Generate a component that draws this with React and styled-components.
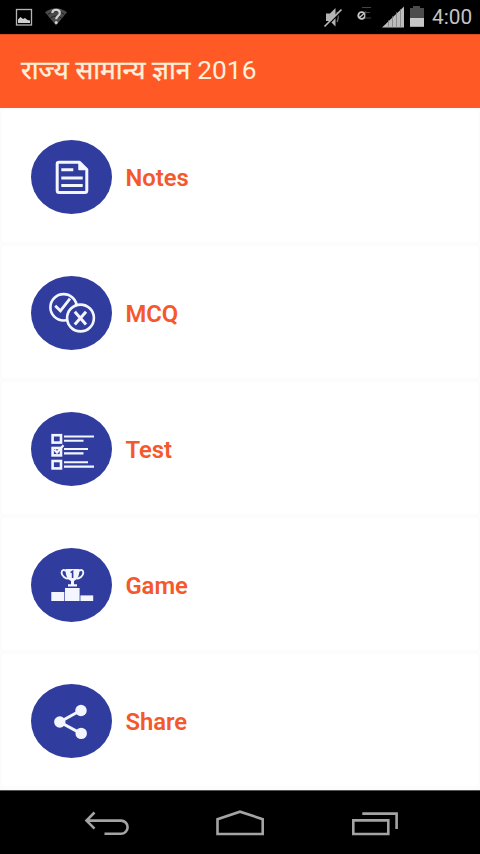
import React from "react";
import styled, { createGlobalStyle } from "styled-components";

const GlobalStyle = createGlobalStyle`
  * { box-sizing: border-box; }
  body { margin: 0; background: #fcfcfc; font-family: Roboto, "Noto Sans", sans-serif; }
`;

const Screen = styled.div`
  width: 480px;
  height: 854px;
  display: flex;
  flex-direction: column;
  overflow: hidden;
`;

const StatusBar = styled.header`
  height: 34px;
  flex: none;
  background: #000;
  display: flex;
  align-items: center;
  justify-content: space-between;
`;

const StatusGlyphs = styled.svg`
  display: block;
  width: ${(p) => p.$width}px;
  height: 34px;
`;

const StatusGroup = styled.div`
  display: flex;
  align-items: center;
  padding-right: 8px;
`;

const Clock = styled.span`
  width: 40px;
  padding-top: 1px;
  color: #c4c4c4;
  font-size: 20.8px;
  line-height: 33px;
  white-space: nowrap;
`;

const AppBar = styled.div`
  height: 74px;
  flex: none;
  background: #ff5a26;
  border-top: 1px solid #d94d20;
  padding: 0 0 4px 21px;
  display: flex;
  align-items: center;
`;

const Title = styled.h1`
  margin: 0;
  display: flex;
  align-items: baseline;
  gap: 7px;
  color: #fff0dc;
  font-size: 26.3px;
  font-weight: 400;
  line-height: 40px;
  white-space: nowrap;
`;

const HindiText = styled.span`
  -webkit-text-stroke: 0.4px #fff0dc;
`;

const List = styled.main`
  flex: 1;
  padding: 2px 2px 0;
  display: flex;
  flex-direction: column;
  gap: 4px;
`;

const Card = styled.button`
  height: 132px;
  flex: none;
  border: 0;
  background: #fff;
  padding: 2px 0 0 29px;
  display: flex;
  align-items: center;
  gap: 13.4px;
  text-align: left;
`;

const Disc = styled.span`
  width: 81px;
  height: 74px;
  border-radius: 50%;
  background: #303d9f;
`;

const DiscIcon = styled.svg`
  display: block;
  width: 81px;
  height: 74px;
  fill: none;
  stroke: #f4f6ff;
`;

const Label = styled.span`
  padding-top: 2px;
  color: #f4582b;
  font-family: Roboto, sans-serif;
  font-size: 23.8px;
  font-weight: 600;
  line-height: 30px;
`;

const NavBar = styled.nav`
  height: 64px;
  flex: none;
  background: #000;
  border-top: 1px solid #555;
`;

const NavIcons = styled.svg`
  display: block;
  width: 480px;
  height: 63px;
  fill: none;
  stroke: #a4a4a4;
  stroke-width: 2.6;
`;

const NotesIcon = () => (
  <DiscIcon viewBox="0 0 81 74" strokeWidth="3" strokeLinejoin="round">
    <path d="M28 22.2H48.5L55.8 29.5V50.5Q55.8 52.5 53.8 52.5H28Q26.2 52.5 26.2 50.5V24Q26.2 22.2 28 22.2Z" />
    <path d="M48 22.5V29.5H55.5Z" fill="#f4f6ff" strokeWidth="1.5" />
    <path d="M30.3 29.7H42.3M30.3 38H51.7M30.3 45.4H51.7" />
  </DiscIcon>
);

const McqIcon = () => (
  <DiscIcon viewBox="0 0 81 74" strokeWidth="2.6">
    <circle cx="32.6" cy="31.3" r="13.2" />
    <path d="M24.2 29.8L29.4 34.8L39 22.6" strokeWidth="2.8" />
    <circle cx="49.5" cy="42" r="13.4" fill="#303d9f" />
    <path d="M43.8 35.8L55 48.6M55 35.8L43.8 48.6" strokeWidth="3" />
  </DiscIcon>
);

const TestIcon = () => (
  <DiscIcon viewBox="0 0 81 74" strokeWidth="2.6">
    <rect x="21.6" y="23.2" width="8.4" height="7.4" />
    <rect x="21.6" y="36" width="8.4" height="7.4" />
    <rect x="21.6" y="49" width="8.4" height="7.4" />
    <path d="M23.5 37.8L26 40.6L32.5 33.2" strokeWidth="2.2" />
    <path d="M33 24.5H63M33 28.7H52.5M33 37H57M33 41.4H52.5M33 50.3H57M33 54.6H63" strokeWidth="2.1" />
  </DiscIcon>
);

const GameIcon = () => (
  <DiscIcon viewBox="0 0 81 74">
    <g fill="#f4f6ff" stroke="none">
      <rect x="20.3" y="44" width="13" height="9" />
      <rect x="34" y="40" width="14.6" height="13" />
      <rect x="49.4" y="47.4" width="12.8" height="5.6" />
      <path d="M34.5 21H48.5C48.5 27.5 46.5 31.5 43 33V36.2H46V38.6H37V36.2H40V33C36.5 31.5 34.5 27.5 34.5 21Z" />
    </g>
    <path
      d="M35.2 23.2C33 21 30.6 22 30.6 24.8C30.6 28 34.5 30.6 37.5 30.6M47.8 23.2C50 21 52.3 22 52.3 24.8C52.3 28 48.5 30.6 45.5 30.6"
      strokeWidth="1.9"
    />
    <path d="M39.6 24.6L41.6 23.2V30" stroke="#303d9f" strokeWidth="1.6" />
  </DiscIcon>
);

const ShareIcon = () => (
  <DiscIcon viewBox="0 0 81 74" strokeWidth="3">
    <path d="M50 26.3L28.8 38L50.2 49.6" />
    <g fill="#f4f6ff" stroke="none">
      <circle cx="50" cy="26.5" r="5.7" />
      <circle cx="28.8" cy="38" r="5.7" />
      <circle cx="50.2" cy="49.4" r="5.7" />
    </g>
  </DiscIcon>
);

const items = [
  { label: "Notes", Icon: NotesIcon },
  { label: "MCQ", Icon: McqIcon },
  { label: "Test", Icon: TestIcon },
  { label: "Game", Icon: GameIcon },
  { label: "Share", Icon: ShareIcon },
];

export default function App() {
  return (
    <>
      <GlobalStyle />
      <Screen>
        <StatusBar>
          <StatusGlyphs $width={80} viewBox="0 0 80 34">
            <rect x="16.5" y="9.5" width="15" height="15.5" fill="none" stroke="#b5b5b5" strokeWidth="1.3" />
            <path d="M18 23V19.5L20.5 17L23 19L25 18L27.5 20L30 20.5V23Z" fill="#d0d0d0" />
            <path d="M45 12.2Q56 4.5 67 12.2L56 25.5Z" fill="#4b4b4b" />
            <path d="M47.5 14.5Q56 8.5 64.5 14.5M50.5 18Q56 14 61.5 18" fill="none" stroke="#222" strokeWidth="1" />
            <path d="M52.3 13Q52.6 9.8 56 9.8Q59.8 9.8 59.8 12.9Q59.8 15 57.8 16.2Q56.2 17.2 56.2 19.3" fill="none" stroke="#d2d2d2" strokeWidth="2.2" />
            <circle cx="56.2" cy="22.6" r="1.5" fill="#d2d2d2" />
          </StatusGlyphs>
          <StatusGroup>
            <StatusGlyphs $width={112} viewBox="320 0 112 34">
              <path d="M326 13.5H330L335.5 8V26.5L330 21H326Z" fill="#b4b4b4" />
              <path d="M337 12Q339.5 17 337 22" fill="none" stroke="#777" strokeWidth="1.2" />
              <path d="M325.5 27.5L342.5 10" stroke="#000" strokeWidth="1.6" />
              <path d="M324.5 26.5L341.5 9.5" stroke="#b8b8b8" strokeWidth="1.7" />
              <circle cx="361.7" cy="15.5" r="3.4" fill="none" stroke="#c8c8c8" strokeWidth="1.9" />
              <path d="M359.5 17.5L364 13.5" stroke="#c8c8c8" strokeWidth="1.4" />
              <path d="M362 7.5H371M365.5 11V18H371M366 12.5H370" fill="none" stroke="#444" strokeWidth="1.2" />
              <path d="M382 27.5L404 6.5V27.5Z" fill="#bcbcbc" />
              <path d="M388.5 20V28M392.5 16V28M396.5 12V28M400.5 9V28" stroke="#777" strokeWidth="0.7" />
              <path d="M410 8H413V6H420V8H424V18H410Z" fill="#4c4c4c" />
              <rect x="410" y="18" width="14" height="8.8" fill="#c7c7c7" />
            </StatusGlyphs>
            <Clock>4:00</Clock>
          </StatusGroup>
        </StatusBar>
        <AppBar>
          <Title>
            <HindiText>राज्य सामान्य ज्ञान</HindiText>
            <span>2016</span>
          </Title>
        </AppBar>
        <List>
          {items.map(({ label, Icon }) => (
            <Card key={label}>
              <Disc>
                <Icon />
              </Disc>
              <Label>{label}</Label>
            </Card>
          ))}
        </List>
        <NavBar>
          <NavIcons viewBox="0 791 480 63">
            <path d="M94.5 812.5L86.5 820.6L94.5 828.7M86.5 820.6H121A6.5 6.5 0 0 1 121 833.8H104.5" />
            <path d="M217.5 834V819.2L240 811.7L262.7 819.2V834Z" />
            <path d="M353.3 820.4H388.3V834H353.3ZM362.3 813.6H396.6V829" />
          </NavIcons>
        </NavBar>
      </Screen>
    </>
  );
}
